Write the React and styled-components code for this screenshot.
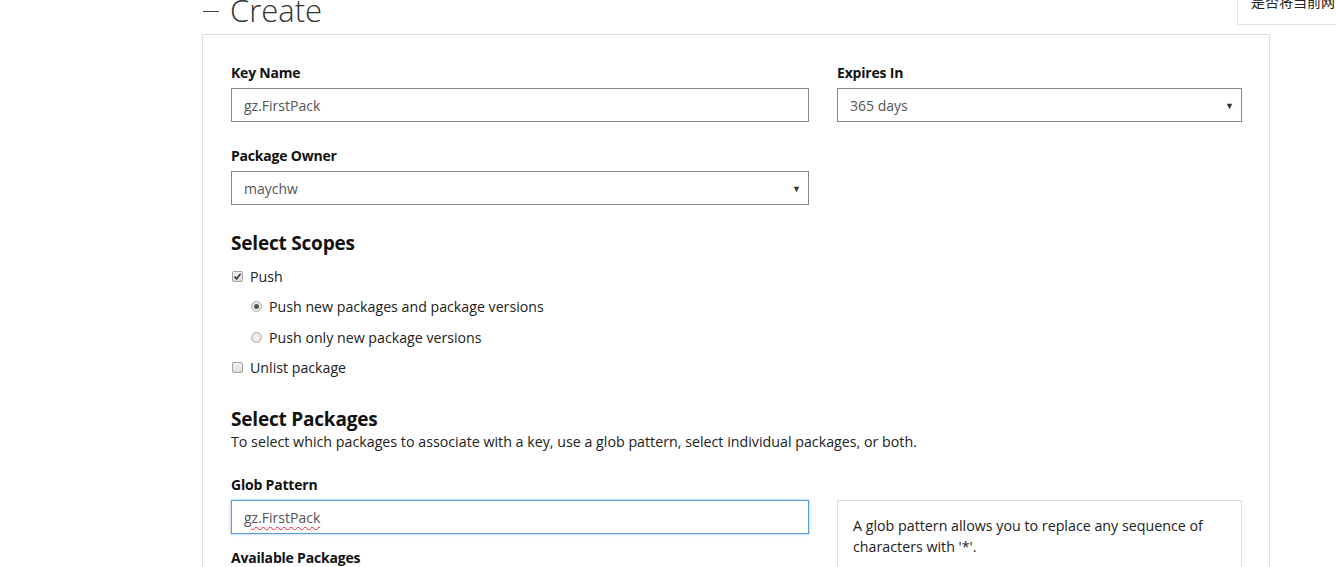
import React from "react";
import styled, { createGlobalStyle } from "styled-components";

const Global = createGlobalStyle`
  html, body { margin: 0; padding: 0; background: #fff; }
  body { font-family: "Open Sans", "Noto Sans", Arial, sans-serif; color: #222; overflow: hidden; }
  * { box-sizing: border-box; }
`;

const Page = styled.div`
  position: relative;
  width: 1336px;
  height: 567px;
  overflow: hidden;
  padding-left: 202px;
`;

const Title = styled.h1`
  margin: -13px 0 0 1px;
  height: 47px;
  font-size: 31px;
  font-weight: 300;
  line-height: 47px;
  color: #333;
  display: flex;
  align-items: center;
  gap: 11px;
`;

const Dash = styled.span`
  display: inline-block;
  width: 16px;
  height: 1px;
  background: #444;
  margin-top: 2px;
`;

const Panel = styled.div`
  width: 1068px;
  border: 1px solid #dedede;
  padding: 28px 28px 0 28px;
`;

const Row = styled.div`
  display: grid;
  grid-template-columns: 578px 405px;
  column-gap: 28px;
  align-items: start;
`;

const Group = styled.div`
  margin-bottom: ${(p) => p.$mb ?? 24}px;
`;

const Label = styled.div`
  font-size: 14px;
  font-weight: 700;
  line-height: 20px;
  color: #111;
  margin-bottom: 5px;
  letter-spacing: -0.2px;
`;

const Field = styled.div`
  position: relative;
  height: 34px;
  border: 1px solid ${(p) => (p.$focus ? "#5b9be0" : "#8a8a8a")};
  box-shadow: ${(p) => (p.$focus ? "0 0 3px rgba(80,150,230,0.6)" : "none")};
  padding: 0 12px;
  display: flex;
  align-items: center;
  font-size: 14px;
  color: #555;
`;

const Spell = styled.span`
  text-decoration: underline wavy #e23;
  text-decoration-thickness: 1px;
  text-underline-offset: 3px;
`;

const Arrow = styled.span`
  position: absolute;
  right: 7px;
  top: 50%;
  transform: translateY(-50%);
  font-size: 9px;
  color: #333;
`;

const Heading = styled.h2`
  margin: 0;
  font-size: 19px;
  font-weight: 700;
  line-height: 28px;
  color: #111;
  letter-spacing: -0.2px;
`;

const OptionRow = styled.label`
  display: flex;
  align-items: center;
  height: 30.5px;
  padding-left: ${(p) => (p.$indent ? 20 : 1)}px;
  font-size: 14.2px;
  color: #222;
`;

const Box = styled.span`
  width: 11px;
  height: 11px;
  margin-right: 7px;
  border: 1px solid #a5a5a5;
  border-radius: 2px;
  background: linear-gradient(#f4f4f4, #dcdcdc);
  display: inline-flex;
  align-items: center;
  justify-content: center;
  flex-shrink: 0;
`;

const Radio = styled.span`
  width: 11px;
  height: 11px;
  margin-right: 7px;
  border: 1px solid #b0b0b0;
  border-radius: 50%;
  background: radial-gradient(circle, #f6f6f6 0%, #dedede 100%);
  display: inline-flex;
  align-items: center;
  justify-content: center;
  flex-shrink: 0;
  &::after {
    content: "";
    width: 5px;
    height: 5px;
    border-radius: 50%;
    background: ${(p) => (p.$on ? "#555" : "transparent")};
  }
`;

const Options = styled.div`
  margin: 4px 0 22px;
`;

const Desc = styled.p`
  margin: -1px 0 23px;
  font-size: 14.25px;
  line-height: 20px;
  color: #222;
`;

const Info = styled.div`
  margin-top: 25px;
  border: 1px solid #dedede;
  border-bottom: none;
  height: 90px;
  padding: 14px 15px;
  font-size: 14.25px;
  line-height: 21px;
  color: #222;
`;

const Popup = styled.div`
  position: absolute;
  top: 0;
  left: 1237px;
  width: 200px;
  height: 25px;
  border: 1px solid #e2e2e2;
  border-top: none;
  background: #fff;
  padding-left: 13px;
  font-family: "Noto Sans CJK SC", sans-serif;
  font-size: 14px;
  line-height: 14px;
  color: #222;
  overflow: hidden;
  white-space: nowrap;
  & > span { display: block; margin-top: -6px; }
`;

const Check = () => (
  <svg width="9" height="9" viewBox="0 0 9 9">
    <path d="M1.5 4.6 L3.6 6.7 L7.6 1.8" fill="none" stroke="#333" strokeWidth="1.6" />
  </svg>
);

export default function App() {
  return (
    <>
      <Global />
      <Page>
        <Title>
          <Dash />
          Create
        </Title>
        <Panel>
          <Row>
            <Group>
              <Label>Key Name</Label>
              <Field>gz.FirstPack</Field>
            </Group>
            <Group>
              <Label>Expires In</Label>
              <Field>
                365 days
                <Arrow>▼</Arrow>
              </Field>
            </Group>
          </Row>
          <Row>
            <Group>
              <Label>Package Owner</Label>
              <Field>
                maychw
                <Arrow>▼</Arrow>
              </Field>
            </Group>
          </Row>
          <Heading>Select Scopes</Heading>
          <Options>
            <OptionRow>
              <Box>
                <Check />
              </Box>
              Push
            </OptionRow>
            <OptionRow $indent>
              <Radio $on />
              Push new packages and package versions
            </OptionRow>
            <OptionRow $indent>
              <Radio />
              Push only new package versions
            </OptionRow>
            <OptionRow>
              <Box />
              Unlist package
            </OptionRow>
          </Options>
          <Heading>Select Packages</Heading>
          <Desc>
            To select which packages to associate with a key, use a glob pattern, select individual packages, or both.
          </Desc>
          <Row>
            <div>
              <Group $mb={14}>
                <Label>Glob Pattern</Label>
                <Field $focus>
                  <Spell>gz.FirstPack</Spell>
                </Field>
              </Group>
              <Label>Available Packages</Label>
            </div>
            <Info>
              A glob pattern allows you to replace any sequence of characters with '*'.
            </Info>
          </Row>
        </Panel>
        <Popup>
          <span>是否将当前网页翻译成中文</span>
        </Popup>
      </Page>
    </>
  );
}
